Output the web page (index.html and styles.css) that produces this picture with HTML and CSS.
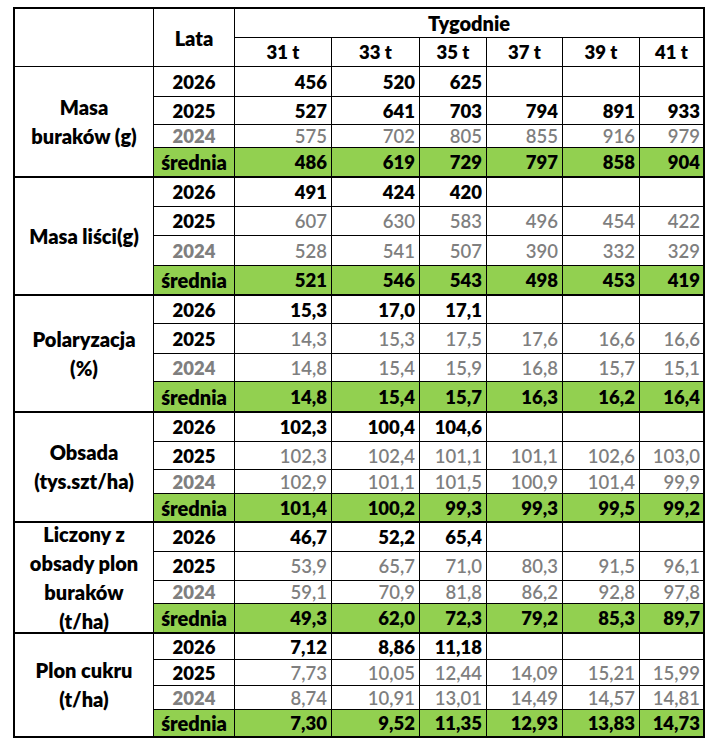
FILE: index.html
```html
<!DOCTYPE html>
<html lang="pl">
<head>
<meta charset="utf-8">
<title>Tygodnie</title>
<link rel="stylesheet" href="styles.css">
</head>
<body>
<div class="sheet">
  <div class="c corner"></div>
  <div class="c lata txt">Lata</div>
  <div class="c tyg txt last">Tygodnie</div>
  <div class="c wk">31 t</div><div class="c wk">33 t</div><div class="c wk">35 t</div><div class="c wk">37 t</div><div class="c wk">39 t</div><div class="c wk last">41 t</div>

  <!-- Masa buraków -->
  <div class="c lbl txt">Masa<br>buraków (g)</div>
  <div class="c yr">2026</div><div class="c v b">456</div><div class="c v b">520</div><div class="c v b">625</div><div class="c v"></div><div class="c v"></div><div class="c v last"></div>
  <div class="c yr">2025</div><div class="c v b">527</div><div class="c v b">641</div><div class="c v b">703</div><div class="c v b">794</div><div class="c v b">891</div><div class="c v b last">933</div>
  <div class="c yr g">2024</div><div class="c v g">575</div><div class="c v g">702</div><div class="c v g">805</div><div class="c v g">855</div><div class="c v g">916</div><div class="c v g last">979</div>
  <div class="c yr avg txt">średnia</div><div class="c v avg">486</div><div class="c v avg">619</div><div class="c v avg">729</div><div class="c v avg">797</div><div class="c v avg">858</div><div class="c v avg last">904</div>

  <!-- Masa liści -->
  <div class="c lbl txt">Masa liści(g)</div>
  <div class="c yr">2026</div><div class="c v b">491</div><div class="c v b">424</div><div class="c v b">420</div><div class="c v"></div><div class="c v"></div><div class="c v last"></div>
  <div class="c yr">2025</div><div class="c v g">607</div><div class="c v g">630</div><div class="c v g">583</div><div class="c v g">496</div><div class="c v g">454</div><div class="c v g last">422</div>
  <div class="c yr g">2024</div><div class="c v g">528</div><div class="c v g">541</div><div class="c v g">507</div><div class="c v g">390</div><div class="c v g">332</div><div class="c v g last">329</div>
  <div class="c yr avg txt">średnia</div><div class="c v avg">521</div><div class="c v avg">546</div><div class="c v avg">543</div><div class="c v avg">498</div><div class="c v avg">453</div><div class="c v avg last">419</div>

  <!-- Polaryzacja -->
  <div class="c lbl txt">Polaryzacja<br>(%)</div>
  <div class="c yr">2026</div><div class="c v b">15,3</div><div class="c v b">17,0</div><div class="c v b">17,1</div><div class="c v"></div><div class="c v"></div><div class="c v last"></div>
  <div class="c yr">2025</div><div class="c v g">14,3</div><div class="c v g">15,3</div><div class="c v g">17,5</div><div class="c v g">17,6</div><div class="c v g">16,6</div><div class="c v g last">16,6</div>
  <div class="c yr g">2024</div><div class="c v g">14,8</div><div class="c v g">15,4</div><div class="c v g">15,9</div><div class="c v g">16,8</div><div class="c v g">15,7</div><div class="c v g last">15,1</div>
  <div class="c yr avg txt">średnia</div><div class="c v avg">14,8</div><div class="c v avg">15,4</div><div class="c v avg">15,7</div><div class="c v avg">16,3</div><div class="c v avg">16,2</div><div class="c v avg last">16,4</div>

  <!-- Obsada -->
  <div class="c lbl txt">Obsada<br>(tys.szt/ha)</div>
  <div class="c yr">2026</div><div class="c v b">102,3</div><div class="c v b">100,4</div><div class="c v b">104,6</div><div class="c v"></div><div class="c v"></div><div class="c v last"></div>
  <div class="c yr">2025</div><div class="c v g">102,3</div><div class="c v g">102,4</div><div class="c v g">101,1</div><div class="c v g">101,1</div><div class="c v g">102,6</div><div class="c v g last">103,0</div>
  <div class="c yr g">2024</div><div class="c v g">102,9</div><div class="c v g">101,1</div><div class="c v g">101,5</div><div class="c v g">100,9</div><div class="c v g">101,4</div><div class="c v g last">99,9</div>
  <div class="c yr avg txt">średnia</div><div class="c v avg">101,4</div><div class="c v avg">100,2</div><div class="c v avg">99,3</div><div class="c v avg">99,3</div><div class="c v avg">99,5</div><div class="c v avg last">99,2</div>

  <!-- Liczony z obsady plon buraków -->
  <div class="c lbl txt">Liczony z<br>obsady plon<br>buraków<br>(t/ha)</div>
  <div class="c yr">2026</div><div class="c v b">46,7</div><div class="c v b">52,2</div><div class="c v b">65,4</div><div class="c v"></div><div class="c v"></div><div class="c v last"></div>
  <div class="c yr">2025</div><div class="c v g">53,9</div><div class="c v g">65,7</div><div class="c v g">71,0</div><div class="c v g">80,3</div><div class="c v g">91,5</div><div class="c v g last">96,1</div>
  <div class="c yr g">2024</div><div class="c v g">59,1</div><div class="c v g">70,9</div><div class="c v g">81,8</div><div class="c v g">86,2</div><div class="c v g">92,8</div><div class="c v g last">97,8</div>
  <div class="c yr avg txt">średnia</div><div class="c v avg">49,3</div><div class="c v avg">62,0</div><div class="c v avg">72,3</div><div class="c v avg">79,2</div><div class="c v avg">85,3</div><div class="c v avg last">89,7</div>

  <!-- Plon cukru -->
  <div class="c lbl txt">Plon cukru<br>(t/ha)</div>
  <div class="c yr">2026</div><div class="c v b">7,12</div><div class="c v b">8,86</div><div class="c v b">11,18</div><div class="c v"></div><div class="c v"></div><div class="c v last"></div>
  <div class="c yr">2025</div><div class="c v g">7,73</div><div class="c v g">10,05</div><div class="c v g">12,44</div><div class="c v g">14,09</div><div class="c v g">15,21</div><div class="c v g last">15,99</div>
  <div class="c yr g">2024</div><div class="c v g">8,74</div><div class="c v g">10,91</div><div class="c v g">13,01</div><div class="c v g">14,49</div><div class="c v g">14,57</div><div class="c v g last">14,81</div>
  <div class="c yr avg txt">średnia</div><div class="c v avg">7,30</div><div class="c v avg">9,52</div><div class="c v avg">11,35</div><div class="c v avg">12,93</div><div class="c v avg">13,83</div><div class="c v avg last">14,73</div>
</div>
</body>
</html>
```

FILE: styles.css
```css
html, body {
  margin: 0;
  padding: 0;
  background: #ffffff;
}

body {
  font-family: Lato, "Open Sans", "Liberation Sans", sans-serif;
  font-size: 18.5px;
  color: #000000;
}

.sheet {
  display: grid;
  grid-template-columns: 139px 81px 97px 88px 67px 76px 77px 65px;
  grid-template-rows:
    29px 29px
    30px 28px 23px 30px
    29px 29px 30px 30px
    28px 30px 28px 31px
    29px 28px 24px 29px
    29px 29px 23px 30px
    26px 26px 24px 28px;
  width: max-content;
  margin: 7px 0 0 13px;
  border-top: 2px solid #000;
  border-left: 2px solid #000;
}

.c {
  box-sizing: border-box;
  border-right: 1px solid #000;
  border-bottom: 1px solid #000;
  display: flex;
  align-items: center;
  justify-content: center;
  white-space: nowrap;
  overflow: hidden;
  font-weight: 800;
}

.c.txt {
  font-size: 20px;
}

.c.last {
  border-right-width: 2px;
}

.corner,
.lata {
  grid-row: span 2;
}

.tyg {
  grid-column: span 6;
}

.lbl {
  grid-row: span 4;
  text-align: center;
  line-height: 29px;
  border-bottom-width: 2px;
  overflow: visible;
}

.v {
  justify-content: flex-end;
  padding-right: 4px;
}

.v.last {
  padding-right: 3px;
}

.v.g {
  font-weight: 600;
}

.g {
  color: #7f7f7f;
}

.avg {
  background: #92d050;
  color: #000;
  border-bottom-width: 2px;
}
```
